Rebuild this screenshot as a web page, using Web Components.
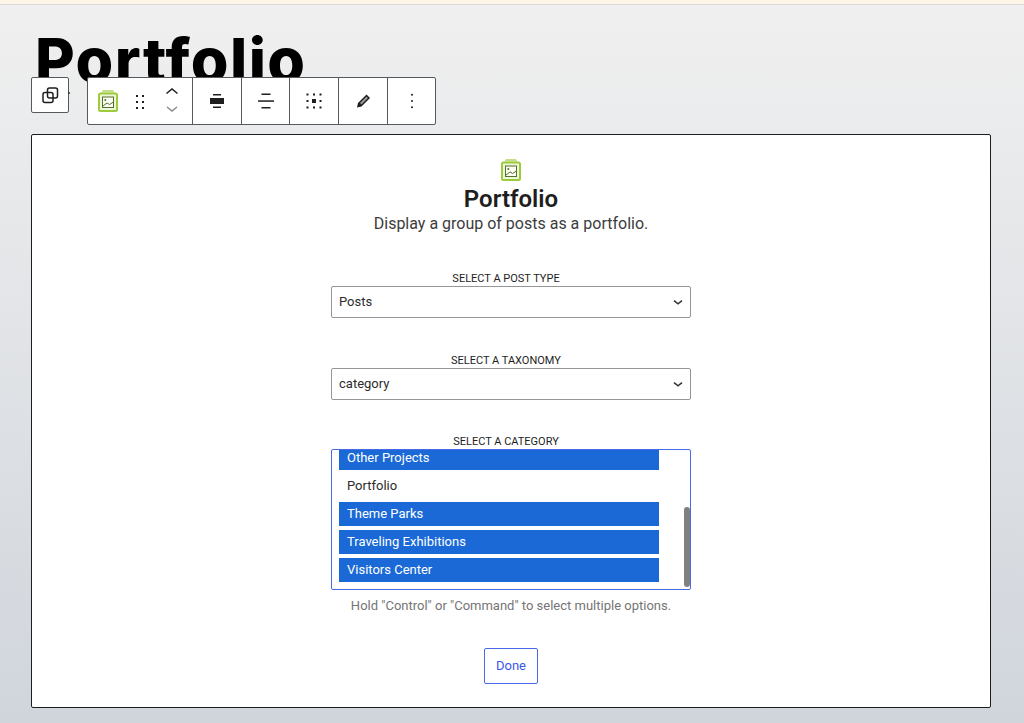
<!DOCTYPE html>
<html><head><meta charset="utf-8">
<style>
html,body{margin:0;padding:0;height:723px;overflow:hidden}
body{font-family:Roboto,"Liberation Sans",sans-serif;background:linear-gradient(180deg,#f0f0f0 0,#d0d5dc 100%)}
</style></head><body>
<template id="t-page"><style>
:host{display:flex;flex-direction:column;height:723px}
.strip{height:4px;background:#fdf5e8;border-bottom:1px solid #dcdcd6;flex:none}
.wrap{padding:0 32px 0 31px;display:flex;flex-direction:column}
</style><div class="strip"></div><div class="wrap"><slot></slot></div></template>

<template id="t-title"><style>
:host{display:block;height:72px;overflow:visible;padding-left:4px;box-sizing:border-box}
h1{margin:0;font:800 61px/73px Inter,"Liberation Sans",sans-serif;letter-spacing:1.4px;color:#000;white-space:nowrap;padding-top:19px}
</style><h1><slot></slot></h1></template>

<template id="t-bar"><style>
:host{display:flex;align-items:flex-start;height:57px;position:relative}
.sw{width:36px;height:34px;border:1px solid #55595e;border-radius:2px;background:#fff;display:flex;align-items:center;justify-content:center;flex:none;position:relative}
.sw::after{content:"";position:absolute;right:-2px;top:14px;width:2px;height:2px;background:#333;border-radius:50%}
.tb{margin-left:18px;height:46px;border:1px solid #55595e;border-radius:2px;background:#fff;display:flex;flex:none}
</style><div class="sw"><slot name="switch"></slot></div><div class="tb"><slot></slot></div></template>

<template id="t-group"><style>
:host{display:flex;align-items:center;justify-content:center;height:46px;border-left:1px solid #55595e;box-sizing:border-box;flex:none}
:host([first]){border-left:0}
</style><slot></slot></template>

<template id="t-card"><style>
:host{display:flex;flex-direction:column;align-items:center;width:958px;height:572px;border:1px solid #1e1e1e;border-radius:2px;background:#fff;box-sizing:content-box;color:#1e1e1e}
</style><slot></slot></template>

<template id="t-head"><style>
:host{display:flex;flex-direction:column;align-items:center;padding-top:23px}
h2{margin:2px 0 0;font:600 24px/30px Roboto,sans-serif;color:#1e1e1e}
p{margin:0;font:400 16px/20px Roboto,sans-serif;color:#3c3c3c}
</style><slot name="icon"></slot><h2><slot name="title"></slot></h2><p><slot name="desc"></slot></p></template>

<template id="t-field"><style>
:host{display:flex;flex-direction:column;width:360px;margin-top:var(--mt,0)}
label{font:400 11px/14px Roboto,sans-serif;text-transform:uppercase;color:#1e1e1e;text-align:center;padding-right:10px;display:block;height:14px}
</style><label><slot name="label"></slot></label><slot></slot></template>

<template id="t-select"><style>
:host{display:flex;align-items:center;justify-content:space-between;box-sizing:border-box;width:360px;height:32px;border:1px solid #969696;border-radius:2px;background:#fff;font:400 13px/16px Roboto,sans-serif;padding:0 6px 0 7px;color:#2c2c2c}
svg{display:block}
</style><span><slot></slot></span><svg width="12" height="12" viewBox="0 0 12 12"><path d="M2 4.6 6 7.8 10 4.6" fill="none" stroke="#333" stroke-width="1.5"/></svg></template>

<template id="t-list"><style>
:host{display:block;position:relative;box-sizing:border-box;width:360px;height:141px;border:1px solid #4a68ea;border-radius:2px;background:#fff;overflow:hidden;padding-left:7px}
.in{margin-top:-4px;display:flex;flex-direction:column;gap:4px;width:320px}
.bar{position:absolute;right:0;top:57px;width:6px;height:80px;background:#808080;border-radius:3px}
</style><div class="in"><slot></slot></div><div class="bar"></div></template>

<template id="t-opt"><style>
:host{display:block;height:24px;box-sizing:border-box;padding:0 8px;font:400 13px/24px Roboto,sans-serif;color:#2c2c2c}
:host([sel]){background:#1a69d6;color:#fff}
</style><slot></slot></template>

<template id="t-help"><style>
:host{display:block;font:400 13px/16px Roboto,sans-serif;color:#757575;margin-top:8px;text-align:center}
</style><slot></slot></template>

<template id="t-done"><style>
:host{display:flex;align-items:center;justify-content:center;box-sizing:border-box;width:54px;height:36px;border:1px solid #4a68ea;border-radius:2px;color:#3858e9;font:400 13px/16px Roboto,sans-serif;margin-top:34px;background:#fff}
</style><slot></slot></template>

<template id="t-logo"><style>
:host{display:block;width:24px;height:24px;flex:none}
svg{display:block}
</style><svg width="24" height="24" viewBox="0 0 24 24" fill="none"><path d="M5.500 3.500 7 1H17L18.500 3.500Z" fill="#c3de8b"/><rect x="3" y="4.500" width="18" height="17.500" rx="1.500" fill="#eef6dc" stroke="#9ccc3c" stroke-width="2"/><rect x="6.500" y="8" width="11" height="10.500" fill="#fbfdf5" stroke="#55702a" stroke-width="1"/><circle cx="9.300" cy="11" r="1" fill="#55702a"/><path d="M7 17 11 14 13.500 15.500 17.500 13" stroke="#55702a" stroke-width="1"/></svg></template>

<script>
for (const [tag,id] of [["wp-page","t-page"],["wp-title","t-title"],["wp-bar","t-bar"],["wp-group","t-group"],["wp-card","t-card"],["wp-head","t-head"],["wp-field","t-field"],["wp-select","t-select"],["wp-list","t-list"],["wp-opt","t-opt"],["wp-help","t-help"],["wp-done","t-done"],["wp-logo","t-logo"]]) {
  customElements.define(tag,class extends HTMLElement{constructor(){super();this.attachShadow({mode:"open"}).appendChild(document.getElementById(id).content.cloneNode(true));}});
}
</script>

<wp-page>
  <wp-title>Portfolio</wp-title>
  <wp-bar>
    <svg slot="switch" width="24" height="24" viewBox="0 0 24 24" fill="none" stroke="#1e1e1e" stroke-width="1.5"><rect x="5" y="9.500" width="10" height="10" rx="2"/><rect x="9.500" y="5" width="10" height="10" rx="2"/></svg>
    <wp-group first style="width:104px;justify-content:flex-start">
      <wp-logo style="margin-left:8px"></wp-logo>
      <svg style="margin-left:12px" width="16" height="24" viewBox="0 0 16 24" fill="#1e1e1e"><rect x="4" y="6" width="2" height="2"/><rect x="10" y="6" width="2" height="2"/><rect x="4" y="12" width="2" height="2"/><rect x="10" y="12" width="2" height="2"/><rect x="4" y="18" width="2" height="2"/><rect x="10" y="18" width="2" height="2"/></svg>
      <svg style="margin-left:12px" width="24" height="34" viewBox="0 0 24 34" fill="none" stroke-width="1.500"><path d="M6.500 9.500 12 5 17.500 9.500" stroke="#1e1e1e"/><path d="M7 23 12 27 17 23" stroke="#8a8a8a"/></svg>
    </wp-group>
    <wp-group style="width:49px"><svg width="24" height="24" viewBox="0 0 24 24" fill="#1e1e1e"><rect x="8" y="5" width="8" height="1.500"/><rect x="5" y="9" width="14" height="6"/><rect x="8" y="17.500" width="8" height="1.500"/></svg></wp-group>
    <wp-group style="width:48px"><svg width="24" height="24" viewBox="0 0 24 24" fill="#1e1e1e"><rect x="7.500" y="4.500" width="9" height="1.500"/><rect x="4" y="11.300" width="16" height="1.500"/><rect x="7.500" y="18" width="9" height="1.500"/></svg></wp-group>
    <wp-group style="width:49px"><svg width="24" height="24" viewBox="0 0 24 24" fill="#1e1e1e"><rect x="4.500" y="4.500" width="2" height="2"/><rect x="11" y="4.500" width="2" height="2"/><rect x="17.500" y="4.500" width="2" height="2"/><rect x="4.500" y="11" width="2" height="2"/><rect x="10" y="10" width="4" height="4"/><rect x="17.500" y="11" width="2" height="2"/><rect x="4.500" y="17.500" width="2" height="2"/><rect x="11" y="17.500" width="2" height="2"/><rect x="17.500" y="17.500" width="2" height="2"/></svg></wp-group>
    <wp-group style="width:49px"><svg width="24" height="24" viewBox="0 0 24 24"><path d="M6 18.500 7 14 15.500 5.500 19 9 10.500 17.500Z" fill="#1e1e1e"/><path d="M9 14 15.500 7.500 17 9 10.500 15.500Z" fill="#fff" opacity=".55"/></svg></wp-group>
    <wp-group style="width:48px"><svg width="24" height="24" viewBox="0 0 24 24" fill="#1e1e1e"><circle cx="12" cy="5.800" r="1"/><circle cx="12" cy="12" r="1"/><circle cx="12" cy="18.200" r="1"/></svg></wp-group>
  </wp-bar>
  <wp-card>
    <wp-head>
      <wp-logo slot="icon"></wp-logo>
      <span slot="title">Portfolio</span>
      <span slot="desc">Display a group of posts as a portfolio.</span>
    </wp-head>
    <wp-field style="--mt:38px"><span slot="label">Select a post type</span><wp-select>Posts</wp-select></wp-field>
    <wp-field style="--mt:36px"><span slot="label">Select a taxonomy</span><wp-select>category</wp-select></wp-field>
    <wp-field style="--mt:35px"><span slot="label">Select a category</span>
      <wp-list>
        <wp-opt sel>Other Projects</wp-opt>
        <wp-opt>Portfolio</wp-opt>
        <wp-opt sel>Theme Parks</wp-opt>
        <wp-opt sel>Traveling Exhibitions</wp-opt>
        <wp-opt sel>Visitors Center</wp-opt>
      </wp-list>
    </wp-field>
    <wp-help>Hold "Control" or "Command" to select multiple options.</wp-help>
    <wp-done>Done</wp-done>
  </wp-card>
</wp-page>
</body></html>
